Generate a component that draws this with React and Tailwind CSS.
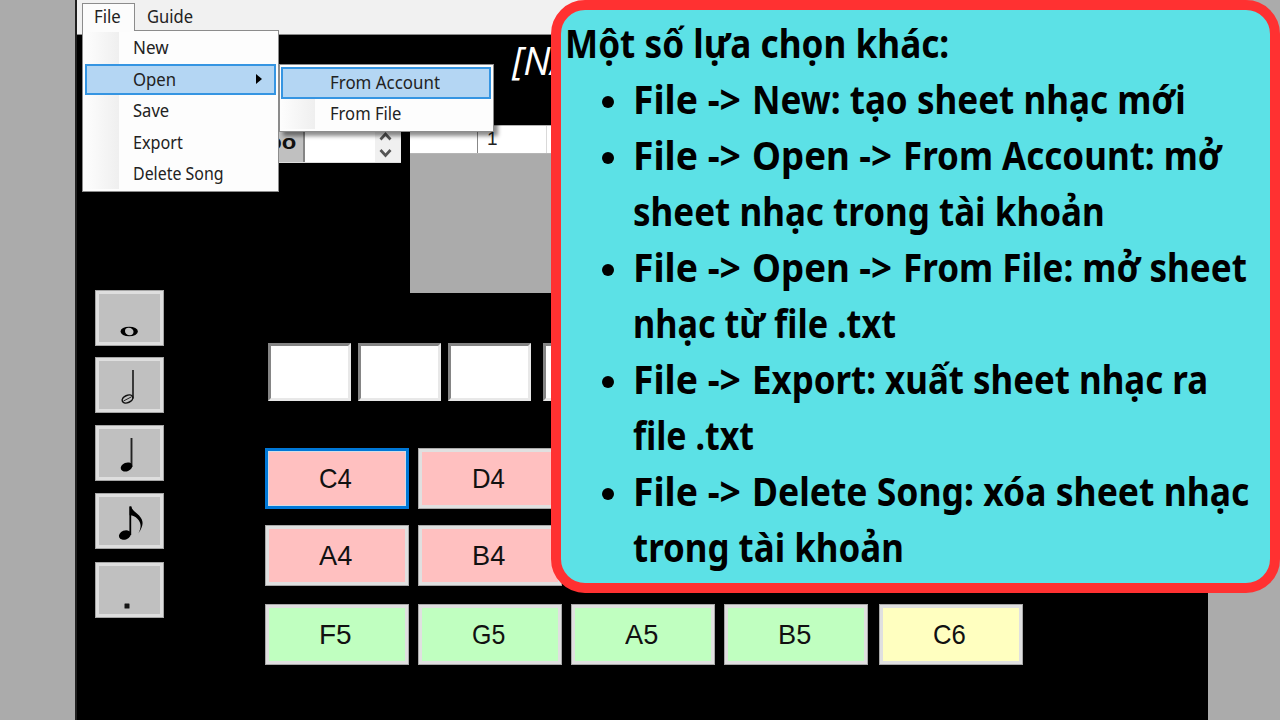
import React, { useLayoutEffect, useRef, useState } from "react";

const UI = "font-['Noto_Sans',sans-serif]";

// Text condensed horizontally so that it fills the given width.
function Fit({ width, className = "", children }) {
  const ref = useRef(null);
  const [scale, setScale] = useState(1);
  useLayoutEffect(() => {
    setScale(width / ref.current.offsetWidth);
  }, [width]);
  return (
    <span className="inline-block shrink-0 whitespace-nowrap" style={{ width }}>
      <span
        ref={ref}
        className={`inline-block origin-left whitespace-nowrap ${className}`}
        style={{ transform: `scaleX(${scale})` }}
      >
        {children}
      </span>
    </span>
  );
}

// Each tip is a list of lines; each line is a list of [phrase, width].
const tips = [
  [[["File ->", 108], ["New: tạo sheet nhạc mới", 434]]],
  [[["File ->", 108], ["Open ->", 140], ["From Account: mở", 319]], [["sheet nhạc trong tài khoản", 472]]],
  [[["File ->", 108], ["Open ->", 140], ["From File: mở sheet", 344]], [["nhạc từ file .txt", 263]]],
  [[["File ->", 108], ["Export: xuất sheet nhạc ra", 456]], [["file .txt", 121]]],
  [[["File ->", 108], ["Delete Song: xóa sheet nhạc", 497]], [["trong tài khoản", 271]]],
];

const menu = [
  ["New", 36],
  ["Open", 43],
  ["Save", 36],
  ["Export", 50],
  ["Delete Song", 91],
];

const glyphs = {
  whole: (
    <path fillRule="evenodd" d="M25.500 40.500a8.700 4.800 0 1 0 17.400 0a8.700 4.800 0 1 0-17.400 0ZM30 40c0-2.300 1.500-3.200 3.500-3.200c3 0 5 1.800 5 4c0 2.200-1.500 3.500-3.500 3.500c-3 0-5-1.800-5-4.300Z" />
  ),
  half: (
    <>
      <path d="M38 12V40.500" stroke="#222" strokeWidth="1.700" />
      <ellipse cx="32.500" cy="41" rx="5.600" ry="3.600" transform="rotate(-24 32.5 41)" fill="none" stroke="#111" strokeWidth="1.500" />
      <path d="M28.500 43L36.500 38.800" stroke="#222" strokeWidth="1" />
    </>
  ),
  quarter: (
    <>
      <path d="M36.500 12V41" stroke="#222" strokeWidth="1.900" />
      <ellipse cx="31.500" cy="41" rx="6" ry="4.300" transform="rotate(-22 31.5 41)" />
    </>
  ),
  eighth: (
    <>
      <path d="M35.300 12.500V41" stroke="#000" strokeWidth="1.800" />
      <ellipse cx="29.900" cy="41" rx="6.200" ry="4.500" transform="rotate(-22 29.9 41)" />
      <path d="M34.600 12.500h1.800c.5 4 4.500 5.500 7.700 9c5 5.500 4.500 10-.7 18c3.500-7 2.500-11-.8-14.500c-2.500-2.800-4.500-3.500-8-3.800Z" />
    </>
  ),
  dot: <rect x="29.500" y="40.500" width="5" height="5" rx="0.500" fill="#161616" />,
};

function NoteButton({ kind, className = "" }) {
  return (
    <div className={`h-14 w-[69px] border border-[#a5a5a5] bg-[#dedede] p-[3px] ${className}`}>
      <div className="flex h-full w-full bg-[#c0c0c0]">
        <svg className="-mt-[3px] -ml-1 block h-14 w-[69px] shrink-0 overflow-visible" viewBox="0 0 69 56">
          {glyphs[kind]}
        </svg>
      </div>
    </div>
  );
}

function Key({ label, color, focused }) {
  return (
    <div
      className={`h-[61px] w-[144px] shrink-0 ${
        focused ? "border-[3px] border-[#0078d7] bg-[#d3dce6] p-px" : "border border-[#a9a9a9] bg-[#e0e0e0] p-[3px]"
      }`}
    >
      <div className={`flex h-full w-full items-center justify-center pr-[3px] font-['Liberation_Sans',sans-serif] text-[28px] leading-none text-[#111] ${color}`}>
        <Fit width={33}>{label}</Fit>
      </div>
    </div>
  );
}

function Slot({ className = "" }) {
  return (
    <div className={`h-[58px] w-[83px] shrink-0 border-[3px] border-t-[#858585] border-r-[#e8e8e8] border-b-[#e8e8e8] border-l-[#858585] bg-white ${className}`} />
  );
}

export default function App() {
  return (
    <div className={`relative flex h-[720px] w-[1280px] overflow-hidden bg-[#ababab] ${UI}`}>
      <div className="ml-[75px] flex h-full w-[1133px] flex-col overflow-hidden border-l-2 border-[#202020] bg-black">
        <div className="flex h-[35px] shrink-0 border-b border-[#8a8a8a] bg-[#f1f1f1] pl-[5px] text-[18px] leading-[24px] text-[#222]">
          <div className="mt-[3px] w-[53px] border border-b-0 border-[#8c8c8c] bg-[#fcfcfc] pl-[11px]">
            <Fit width={27}>File</Fit>
          </div>
          <div className="mt-1 pl-3">
            <Fit width={46}>Guide</Fit>
          </div>
        </div>

        <div className="flex">
          <div className="flex w-[188px] shrink-0 flex-col pt-[255px] pl-[18px]">
            <NoteButton kind="whole" />
            <NoteButton kind="half" className="mt-[11px]" />
            <NoteButton kind="quarter" className="mt-[12px]" />
            <NoteButton kind="eighth" className="mt-[12px]" />
            <NoteButton kind="dot" className="mt-[13px]" />
          </div>

          <div className="flex min-w-0 flex-col">
            <div className="h-[90px] pt-1 pl-[247px] text-white">
              <Fit width={60} className="font-['Open_Sans',sans-serif] text-[38px] leading-[42px] font-medium italic">[NA</Fit>
            </div>
            <div className="flex gap-[9px]">
              <div className="flex h-[38px] w-[136px] border-b border-[#ddd] bg-white">
                <div className="flex w-[40px] items-center justify-end border-r-2 border-[#858585] bg-[#c0c0c0] pr-[7px] pb-[3px] font-['Liberation_Sans',sans-serif] text-[21px] font-bold text-[#111]">
                  <div className="flex w-0 justify-end">
                    <Fit width={76}>Tempo</Fit>
                  </div>
                </div>
                <div className="flex-1" />
                <div className="flex w-[26px] items-center bg-[#f0f0f0]">
                  <svg className="h-[38px] w-5" viewBox="0 0 20 38" fill="none" stroke="#555" strokeWidth="2.700">
                    <path d="M5.500 14.500L10.500 9L15.500 14.500M5.500 25L10.500 30.500L15.500 25" />
                  </svg>
                </div>
              </div>
              <div className="h-[168px] w-[790px] bg-[#ababab]">
                <div className="flex h-[29px] border-t border-b border-[#b5b5b5] bg-white">
                  <div className="w-[68px] border-r border-[#888]" />
                  <div className="w-[69px] border-r border-[#d9d9d9] pt-px pl-[9px] font-['Liberation_Sans',sans-serif] text-[19px] leading-[24px] text-[#222]">1</div>
                </div>
              </div>
            </div>

            <div className="mt-[50px] ml-[3px] flex gap-[7px]">
              <Slot />
              <Slot />
              <Slot />
              <Slot className="ml-[5px]" />
            </div>

            <div className="mt-[47px] flex gap-[9px]">
              <Key label="C4" color="bg-[#ffc0c0]" focused />
              <Key label="D4" color="bg-[#ffc0c0]" />
            </div>
            <div className="mt-[16px] flex gap-[9px]">
              <Key label="A4" color="bg-[#ffc0c0]" />
              <Key label="B4" color="bg-[#ffc0c0]" />
            </div>
            <div className="mt-[18px] flex gap-[9px]">
              <Key label="F5" color="bg-[#c0ffc0]" />
              <Key label="G5" color="bg-[#c0ffc0]" />
              <Key label="A5" color="bg-[#c0ffc0]" />
              <Key label="B5" color="bg-[#c0ffc0]" />
              <div className="ml-[2px]">
                <Key label="C6" color="bg-[#ffffc0]" />
              </div>
            </div>
          </div>
        </div>
      </div>

      <div className="absolute top-[30px] left-[82px] h-[162px] w-[197px] border border-[#8c8c8c] bg-[#fdfdfd] p-[2px] pt-px text-[17.500px] text-[#222]">
        <div className="h-full bg-linear-to-r from-[#fdfdfd] to-[#efefef] bg-[length:34px_100%] bg-no-repeat">
          {menu.map(([label, width]) => (
            <div
              key={label}
              className={`flex h-[31.500px] items-center pb-px pl-[46px] ${
                label === "Open" ? "border-2 border-[#3595e2] bg-[#b4d6f3]" : "border-2 border-transparent"
              }`}
            >
              <Fit width={width}>{label}</Fit>
              {label === "Open" && (
                <svg className="mr-[12px] ml-auto h-[10px] w-[6px]" viewBox="0 0 6 10">
                  <path d="M0 0L6 5L0 10Z" />
                </svg>
              )}
            </div>
          ))}
        </div>
      </div>
      <div className="absolute top-[29px] left-[83px] h-[3px] w-[51px] bg-[#fcfcfc]" />

      <div className="absolute top-[64px] left-[279px] h-[68px] w-[215px] border border-[#8c8c8c] bg-[#fdfdfd] p-[2px] pl-px text-[17.500px] text-[#222] shadow-[4px_4px_4px_rgba(0,0,0,0.45)]">
        <div className="h-full bg-linear-to-r from-[#fdfdfd] to-[#efefef] bg-[length:34px_100%] bg-no-repeat">
          <div className="flex h-[31.500px] items-center border-2 border-[#3595e2] bg-[#b4d6f3] pb-[2px] pl-[47px]">
            <Fit width={110}>From Account</Fit>
          </div>
          <div className="flex h-[31.500px] items-center pb-[2px] pl-[49px]">
            <Fit width={71}>From File</Fit>
          </div>
        </div>
      </div>

      <div className="absolute top-0 left-[551px] h-[593px] w-[729px] rounded-[34px] border-[10px] border-[#ff3131] bg-[#5ce1e6] pt-[5px] pl-[4px] text-[39px] leading-[56px] font-bold text-black">
        <div className="h-14">
          <Fit width={384}>Một số lựa chọn khác:</Fit>
        </div>
        <ul>
          {tips.map((lines, i) => (
            <li key={i} className="flex">
              <span className="mt-[25px] mr-[19px] ml-[37px] size-3 shrink-0 rounded-full bg-black" />
              <div>
                {lines.map((phrases) => (
                  <div key={phrases[0][0]} className="flex h-14 gap-[11px]">
                    {phrases.map(([text, width]) => (
                      <Fit key={text} width={width}>{text}</Fit>
                    ))}
                  </div>
                ))}
              </div>
            </li>
          ))}
        </ul>
      </div>
    </div>
  );
}
